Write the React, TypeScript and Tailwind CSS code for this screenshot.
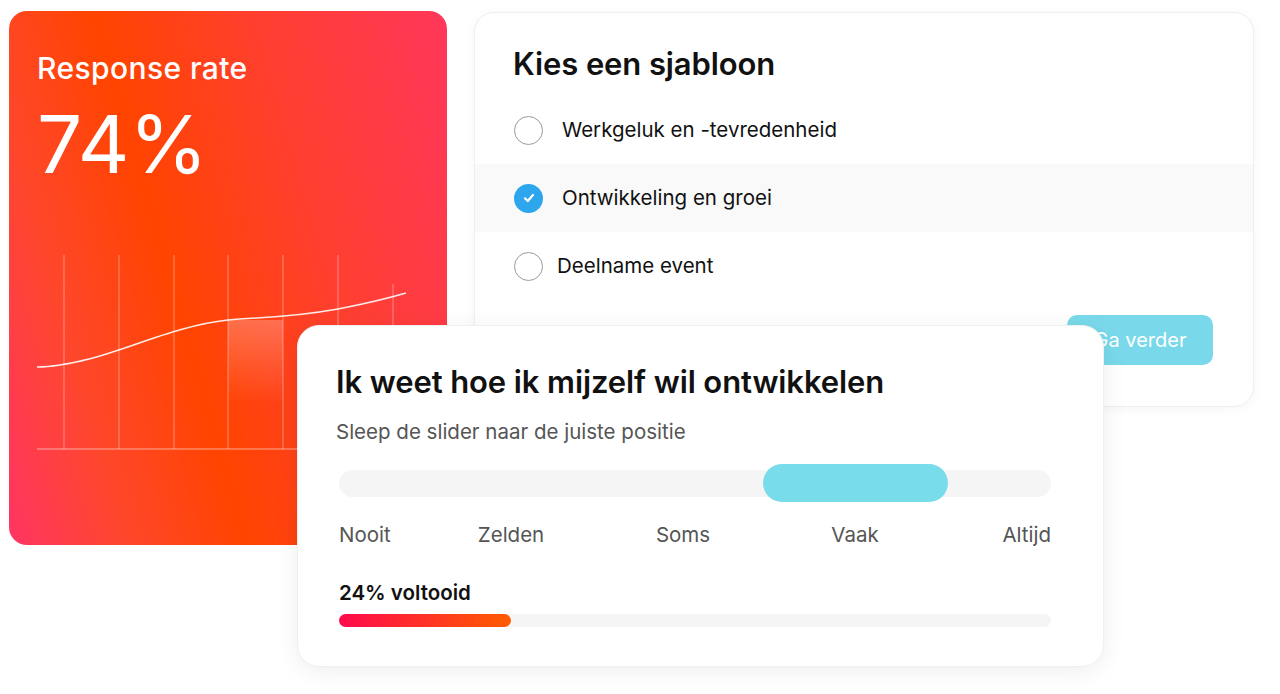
import React from 'react';

const options = [
  { label: 'Werkgeluk en -tevredenheid', checked: false, gap: 'gap-[19px]' },
  { label: 'Ontwikkeling en groei', checked: true, gap: 'gap-[19px]' },
  { label: 'Deelname event', checked: false, gap: 'gap-[14px]' },
];

const scale = ['Nooit', 'Zelden', 'Soms', 'Vaak'];

function ResponseCard() {
  return (
    <div className="absolute left-[9px] top-[11px] w-[438px] h-[534px] rounded-[18px] overflow-hidden bg-[linear-gradient(74deg,#ff3563_0%,#ff472c_20%,#ff4400_40%,#ff3f30_68%,#ff375a_100%)] text-white">
      {/* chart drawing */}
      <svg className="absolute inset-0" width="438" height="534" viewBox="0 0 438 534" fill="none">
        <defs>
          <linearGradient id="col" x1="0" y1="0" x2="0" y2="1">
            <stop offset="0" stopColor="#ffffff" stopOpacity="0.24" />
            <stop offset="0.65" stopColor="#ffffff" stopOpacity="0" />
          </linearGradient>
        </defs>
        <rect x="219" y="309" width="55" height="129" fill="url(#col)" />
        {[55, 110, 165, 219, 274, 329].map((x) => (
          <line key={x} x1={x} y1="244" x2={x} y2="438" stroke="#ffffff" strokeOpacity="0.4" strokeWidth="1" />
        ))}
        <line x1="384" y1="273" x2="384" y2="438" stroke="#ffffff" strokeOpacity="0.4" strokeWidth="1" />
        <line x1="28" y1="438" x2="438" y2="438" stroke="#ffffff" strokeOpacity="0.55" strokeWidth="1" />
        <path
          d="M28 356 C 45 356, 60 353, 80 348 C 120 338, 170 314, 219 309 C 250 306, 280 307, 329 298 C 360 292, 380 287, 397 282"
          stroke="#ffffff"
          strokeOpacity="0.9"
          strokeWidth="1.5"
        />
      </svg>
      <div className="relative pl-[28px] pt-[40px]">
        <div className="text-[30px] leading-[34px] font-medium tracking-[0.4px]">Response rate</div>
        <div className="mt-[19px] text-[80px] leading-none font-normal">74%</div>
      </div>
    </div>
  );
}

function TemplateCard() {
  return (
    <div className="absolute left-[474px] top-[12px] w-[780px] h-[395px] rounded-[20px] bg-white border border-[#efefef] shadow-[0_2px_12px_rgba(0,0,0,0.04)] overflow-hidden">
      <h2 className="pl-[38px] pt-[32px] text-[31px] leading-[38px] font-semibold text-[#111] tracking-[-0.1px]">
        Kies een sjabloon
      </h2>
      <div className="mt-[13px]">
        {options.map((o) => (
          <div
            key={o.label}
            className={`h-[68px] flex items-center pl-[39px] ${o.gap} ${o.checked ? 'bg-[#f9f9f9]' : ''}`}
          >
            {o.checked ? (
              <span className="w-[29px] h-[29px] rounded-full bg-[#2ea6ee] flex items-center justify-center">
                <svg width="16" height="16" viewBox="0 0 16 16" fill="none">
                  <path d="M4 8.3 L6.8 11 L12 5" stroke="#fff" strokeWidth="2.2" strokeLinecap="round" strokeLinejoin="round" />
                </svg>
              </span>
            ) : (
              <span className="w-[29px] h-[29px] rounded-full border-[1.5px] border-[#9a9a9a] bg-white" />
            )}
            <span className="text-[20.5px] leading-[26px] text-[#111]">{o.label}</span>
          </div>
        ))}
      </div>
      <div className="flex justify-end pr-[40px] mt-[15px]">
        <button className="w-[146px] h-[50px] rounded-[10px] bg-[#79d9ea] text-white text-[20px] leading-[26px]">
          Ga verder
        </button>
      </div>
    </div>
  );
}

function SliderCard() {
  return (
    <div className="absolute left-[297px] top-[325px] w-[807px] h-[342px] rounded-[22px] bg-white border border-[#f0f0f0] shadow-[0_4px_24px_rgba(0,0,0,0.07)] px-[41px]">
      <h2 className="-ml-[3px] pt-[37px] text-[31px] leading-[38px] font-semibold text-[#111] tracking-[-0.1px]">
        Ik weet hoe ik mijzelf wil ontwikkelen
      </h2>
      <p className="-ml-[3px] mt-[18px] text-[20.5px] leading-[26px] text-[#555]">
        Sleep de slider naar de juiste positie
      </p>
      <div className="relative mt-[25px] h-[27px] w-[712px] rounded-full bg-[#f5f5f5]">
        <div className="absolute left-[424px] -top-[6px] h-[38px] w-[185px] rounded-full bg-[#79dcea]" />
      </div>
      <div className="mt-[25px] w-[712px] flex gap-[172px] text-[20.5px] leading-[26px] text-[#555]">
        {scale.map((s, i) => (
          <div key={s} className={`w-0 flex whitespace-nowrap ${i === 0 ? 'justify-start' : 'justify-center'}`}>
            <span>{s}</span>
          </div>
        ))}
        <div className="ml-auto -ml-[172px] w-0 flex justify-end whitespace-nowrap">
          <span>Altijd</span>
        </div>
      </div>
      <div className="mt-[32px] text-[20.5px] leading-[26px] font-semibold text-[#111]">24% voltooid</div>
      <div className="mt-[8px] h-[13px] w-[712px] rounded-full bg-[#f5f5f5]">
        <div className="h-full w-[172px] rounded-full bg-[linear-gradient(90deg,#ff0a4c,#ff5c00)]" />
      </div>
    </div>
  );
}

export default function App() {
  return (
    <div className="relative w-[1280px] h-[694px] bg-white overflow-hidden font-['Inter',sans-serif]">
      <ResponseCard />
      <TemplateCard />
      <SliderCard />
    </div>
  );
}
